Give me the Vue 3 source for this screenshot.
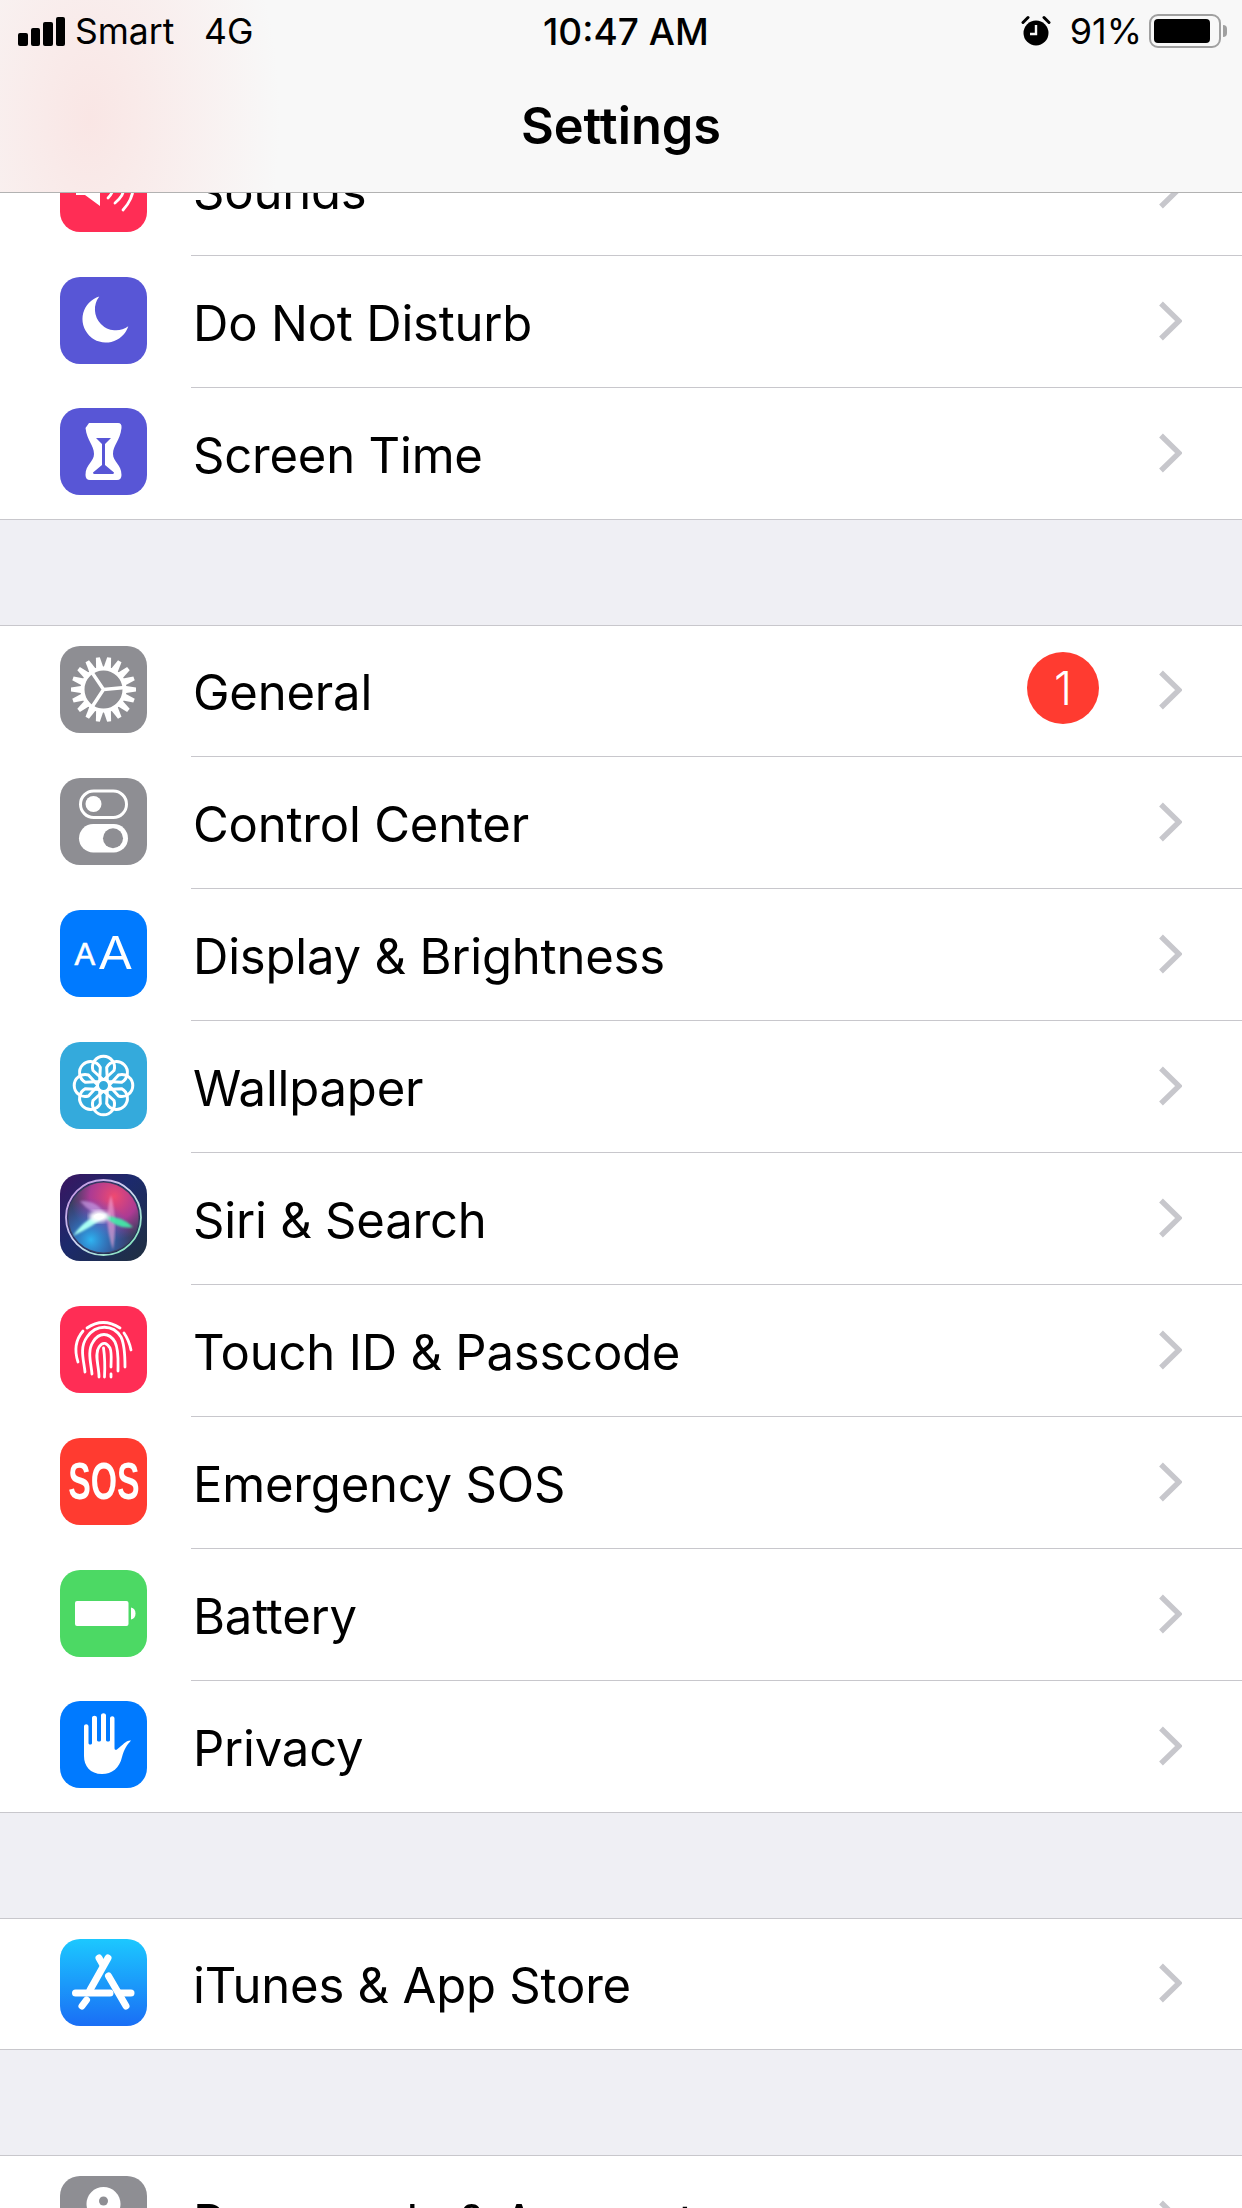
<script setup>
const groups = [
  [
    { id: 'sounds', label: 'Sounds' },
    { id: 'dnd', label: 'Do Not Disturb' },
    { id: 'screentime', label: 'Screen Time' }
  ],
  [
    { id: 'general', label: 'General', badge: 1 },
    { id: 'control', label: 'Control Center' },
    { id: 'display', label: 'Display & Brightness' },
    { id: 'wallpaper', label: 'Wallpaper' },
    { id: 'siri', label: 'Siri & Search' },
    { id: 'touch', label: 'Touch ID & Passcode' },
    { id: 'sos', label: 'Emergency SOS' },
    { id: 'battery', label: 'Battery' },
    { id: 'privacy', label: 'Privacy' }
  ],
  [{ id: 'store', label: 'iTunes & App Store' }],
  [{ id: 'passwords', label: 'Passwords & Accounts' }]
]

const gearTeeth = Array.from({ length: 18 }, (_, i) => i * 20 + 10)
const petals = Array.from({ length: 8 }, (_, i) => i * 45)
</script>

<template>
  <div class="screen">
    <header class="topbar">
      <div class="status">
        <div class="status-left">
          <div class="signal"><i></i><i></i><i></i><i></i></div>
          <span class="carrier">Smart</span>
          <span class="network">4G</span>
        </div>
        <div class="clock">10:47 AM</div>
        <div class="status-right">
          <svg class="alarm" width="30" height="32" viewBox="0 0 30 32">
            <circle cx="15" cy="18" r="12.5" fill="#000" />
            <path d="M15 10v9h-6" fill="none" stroke="#f8f8f8" stroke-width="2.4" />
            <path d="M2 7.5 7 2.5M28 7.5l-5-5" stroke="#000" stroke-width="3" stroke-linecap="round" />
          </svg>
          <span class="percent">91%</span>
          <div class="battery">
            <div class="battery-fill"></div>
          </div>
          <div class="battery-nub"></div>
        </div>
      </div>
      <div class="title">Settings</div>
    </header>

    <main class="list">
      <section v-for="(group, g) in groups" :key="g" class="group">
        <div v-for="row in group" :key="row.id" class="row">
          <div class="icon" :class="'ic-' + row.id">
            <svg v-if="row.id === 'sounds'" viewBox="0 0 87 87">
              <path d="M16 36h9l15-11v36L25 50h-9z" fill="#fff" />
              <path d="M48 53Q58 43 48 33M55 58Q73 43 55 28M63 65Q83 43 63 21" fill="none" stroke="#fff" stroke-width="2.8" stroke-linecap="round" />
            </svg>
            <svg v-else-if="row.id === 'dnd'" viewBox="0 0 87 87">
              <path d="M39.3 19.5A23.5 23.5 0 1 0 68.3 49.3 21 21 0 0 1 39.3 19.5Z" fill="#fff" />
            </svg>
            <svg v-else-if="row.id === 'screentime'" viewBox="0 0 87 87">
              <path d="M29 15H58Q62 15 61.5 20C60 33 53 37 53 46 53 54 61.5 56 61.5 67 61.5 70 60 72 57 72H30C27 72 25.5 70 25.5 67 25.5 56 34 54 34 46 34 37 27 33 25.5 20 25 15 29 15Z" fill="#fff" />
              <path d="M36 30H51L45 36V57L54 64.5Q54 66 52.5 66H34.5Q33 66 33 64.5L42 57V36Z" fill="#5856d6" />
            </svg>
            <svg v-else-if="row.id === 'general'" viewBox="0 0 87 87">
              <circle cx="43.5" cy="43.5" r="21" fill="none" stroke="#fff" stroke-width="4" />
              <path v-for="a in gearTeeth" :key="a" d="M39.5 24 41.5 11H45.5L47.5 24Z" fill="#fff" :transform="`rotate(${a} 43.5 43.5)`" />
              <path d="M43.5 43.5 65 41.5M43.5 43.5 30 23.5M43.5 43.5 30 64" stroke="#fff" stroke-width="3.4" />
            </svg>
            <svg v-else-if="row.id === 'control'" viewBox="0 0 87 87">
              <rect x="20.5" y="13" width="46" height="26.5" rx="13.2" fill="none" stroke="#fff" stroke-width="3" />
              <circle cx="33.5" cy="26" r="8" fill="#fff" />
              <rect x="19" y="46" width="49" height="28.5" rx="14.2" fill="#fff" />
              <circle cx="53" cy="60.2" r="10" fill="#8e8e93" />
            </svg>
            <svg v-else-if="row.id === 'display'" viewBox="0 0 87 87">
              <text x="14.5" y="55" class="aa-small">A</text>
              <text x="39" y="59" class="aa-big">A</text>
            </svg>
            <svg v-else-if="row.id === 'wallpaper'" viewBox="0 0 87 87">
              <path v-for="a in petals" :key="a" d="M43.5 38 33 28.5A11 11 0 1 1 54 28.5Z" fill="none" stroke="#fff" stroke-width="3" stroke-linejoin="round" :transform="`rotate(${a} 43.5 43.5)`" />
              <circle cx="43.5" cy="43.5" r="6" fill="#34aadc" stroke="#fff" stroke-width="3" />
            </svg>
            <svg v-else-if="row.id === 'siri'" viewBox="0 0 87 87">
              <defs>
                <linearGradient id="siriBg" x1="0" y1="0" x2="1" y2="1">
                  <stop offset="0" stop-color="#3a1560" />
                  <stop offset="0.45" stop-color="#1c2a6c" />
                  <stop offset="1" stop-color="#20303f" />
                </linearGradient>
                <linearGradient id="siriRing" x1="0" y1="0" x2="1" y2="1">
                  <stop offset="0" stop-color="#c08ae0" />
                  <stop offset="0.5" stop-color="#d0d8f0" />
                  <stop offset="1" stop-color="#70e8b0" />
                </linearGradient>
                <radialGradient id="siriTop" cx="0.65" cy="0.2" r="0.62">
                  <stop offset="0" stop-color="#f04a70" />
                  <stop offset="0.55" stop-color="#c03a9c" stop-opacity="0.85" />
                  <stop offset="1" stop-color="#a3378f" stop-opacity="0" />
                </radialGradient>
                <radialGradient id="siriLow" cx="0.32" cy="0.82" r="0.6">
                  <stop offset="0" stop-color="#2fb4f0" />
                  <stop offset="1" stop-color="#2a5ae8" stop-opacity="0" />
                </radialGradient>
                <filter id="soft"><feGaussianBlur stdDeviation="0.9" /></filter>
                <filter id="softer"><feGaussianBlur stdDeviation="2" /></filter>
              </defs>
              <rect width="87" height="87" fill="url(#siriBg)" />
              <circle cx="43.5" cy="43.5" r="36" fill="#3a3f60" />
              <circle cx="43.5" cy="43.5" r="35" fill="url(#siriTop)" />
              <circle cx="43.5" cy="43.5" r="35" fill="url(#siriLow)" />
              <circle cx="43.5" cy="43.5" r="37.5" fill="none" stroke="url(#siriRing)" stroke-width="1.8" />
              <path d="M20 27Q38 26 46 42 30 40 20 27Z" fill="#d0a8ec" opacity="0.6" filter="url(#soft)" />
              <path d="M51 21Q43 46 53 76 58 48 51 21Z" fill="#f6a8d8" opacity="0.6" filter="url(#soft)" />
              <path d="M44 42Q62 42 73 53 58 56 44 42Z" fill="#3ff0a8" opacity="0.9" filter="url(#soft)" />
              <path d="M13 62Q28 40 48 40 34 52 13 62Z" fill="#a8fff4" filter="url(#soft)" />
              <ellipse cx="39" cy="42.5" rx="10" ry="5.5" fill="#fff" filter="url(#softer)" />
              <ellipse cx="39" cy="42.5" rx="5" ry="3" fill="#fff" />
            </svg>
            <svg v-else-if="row.id === 'touch'" viewBox="0 0 87 87" fill="none" stroke="#fff" stroke-width="2.8" stroke-linecap="round">
              <path d="M27 22Q43 11 60 22" />
              <path d="M18 56Q12 38 23 25" />
              <path d="M64 27Q69 34 71 44" />
              <path d="M25 66C24 55 19 42 27 31 36 18 53 18 61 31 65 39 65 52 65 61" />
              <path d="M32 68C31 57 27 45 33 36 39 26 49 26 55 36 59 44 58 56 58 65" />
              <path d="M39 71C39 60 34 48 39 41 43 35 47 37 50 42 52 47 51 54 51 61" />
              <path d="M43.5 42C45 52 45 62 44.5 71" />
              <path d="M51 68 51 71" />
            </svg>
            <span v-else-if="row.id === 'sos'" class="sos">SOS</span>
            <svg v-else-if="row.id === 'battery'" viewBox="0 0 87 87">
              <rect x="15" y="31" width="53.5" height="25" rx="2" fill="#fff" />
              <path d="M71 37.5C74 38 75.5 40.5 75.5 43.5 75.5 46.5 74 49 71 49.5Z" fill="#fff" />
            </svg>
            <svg v-else-if="row.id === 'privacy'" viewBox="0 0 87 87">
              <path d="M24 25.5c0-3 4.5-3 4.5 0V42c0 2 3.5 2 3.5 0V17c0-3 5-3 5 0V39c0 2 4 2 4 0V14.5c0-3 5-3 5 0V39c0 2 4 2 4 0V17.5c0-3 4.5-3 4.5 0V47c0 2 1.5 2.5 3 1C63 44 66 39 71 39.5 67 44 64 48 62 56 59.5 67 52 73 42 73 30 73 24 65 24 55Z" fill="#fff" />
            </svg>
            <svg v-else-if="row.id === 'store'" viewBox="0 0 87 87" fill="none" stroke="#fff" stroke-width="7" stroke-linecap="round">
              <path d="M48 19 30 51" />
              <path d="M39 19 43 26" />
              <path d="M48.5 37 66 67" />
              <path d="M15.5 54H50" />
              <path d="M60 54H71" />
              <path d="M22 67 26.5 61" />
            </svg>
            <svg v-else-if="row.id === 'passwords'" viewBox="0 0 87 87">
              <circle cx="43.5" cy="28" r="17" fill="#fff" />
              <circle cx="43.5" cy="25" r="4.5" fill="#8e8e93" />
              <path d="M36 40H51V70L43.5 78 36 70Z" fill="#fff" />
            </svg>
          </div>
          <div class="row-body">
            <span class="label">{{ row.label }}</span>
            <span v-if="row.badge" class="badge">{{ row.badge }}</span>
            <svg class="chevron" width="24" height="40" viewBox="0 0 24 40">
              <path d="M3 2.5 21 20 3 37.5" fill="none" stroke="#c7c7cc" stroke-width="5.4" />
            </svg>
          </div>
        </div>
      </section>
    </main>
  </div>
</template>

<style scoped>
.screen {
  position: relative;
  width: 1242px;
  height: 2208px;
  overflow: hidden;
  background: #efeff4;
  font-family: Inter, "Liberation Sans", sans-serif;
  color: #000;
}

.topbar {
  position: absolute;
  top: 0;
  left: 0;
  right: 0;
  height: 192px;
  z-index: 2;
  background:
    radial-gradient(ellipse 190px 320px at 90px 120px, rgba(250, 220, 218, 0.65), rgba(250, 220, 218, 0)),
    #f8f8f8;
  border-bottom: 1px solid #b2b2b2;
}

.status {
  display: flex;
  align-items: center;
  justify-content: space-between;
  height: 62px;
  position: relative;
}

.status-left {
  display: flex;
  align-items: center;
  padding-left: 18px;
  font-size: 35.5px;
}

.signal {
  display: flex;
  align-items: flex-end;
  gap: 3px;
  height: 29px;
  margin-right: 10px;
}

.signal i {
  display: block;
  width: 9.5px;
  background: #000;
  border-radius: 2px;
}

.signal i:nth-child(1) {
  height: 13px;
}

.signal i:nth-child(2) {
  height: 18px;
}

.signal i:nth-child(3) {
  height: 24px;
}

.signal i:nth-child(4) {
  height: 29px;
}

.carrier {
  width: 129px;
}

.clock {
  position: absolute;
  left: 543px;
  font-size: 37px;
  font-weight: 500;
}

.status-right {
  display: flex;
  align-items: center;
  font-size: 36px;
  padding-right: 15px;
}

.alarm {
  margin-right: 19px;
}

.percent {
  margin-right: 7px;
}

.battery {
  width: 72px;
  height: 34px;
  box-sizing: border-box;
  border: 2.5px solid #a0a0a0;
  border-radius: 9px;
  padding: 3px;
}

.battery-fill {
  width: 90%;
  height: 100%;
  background: #000;
  border-radius: 4px;
}

.battery-nub {
  width: 4px;
  height: 12px;
  margin-left: 2px;
  background: #a0a0a0;
  border-radius: 0 4px 4px 0;
}

.title {
  text-align: center;
  font-size: 50.5px;
  font-weight: 600;
  line-height: 60px;
  margin-top: 34px;
}

.list {
  padding-top: 124px;
}

.group {
  background: #fff;
  margin-bottom: 105px;
}

.group + .group {
  border-top: 1px solid #c8c7cc;
}

.row {
  display: flex;
  align-items: center;
  box-sizing: border-box;
  height: 132px;
  padding-left: 60px;
}

.group + .group .row:first-child {
  height: 131px;
}

.row:last-child {
  border-bottom: 1px solid #c8c7cc;
}

.icon {
  flex: none;
  width: 87px;
  height: 87px;
  margin-top: -4px;
  margin-right: 44px;
  border-radius: 20px;
  overflow: hidden;
  display: flex;
  align-items: center;
  justify-content: center;
}

.icon svg {
  display: block;
  width: 87px;
  height: 87px;
}

.ic-sounds,
.ic-touch {
  background: #ff2d55;
}

.ic-dnd,
.ic-screentime {
  background: #5856d6;
}

.ic-general,
.ic-control,
.ic-passwords {
  background: #8e8e93;
}

.ic-display,
.ic-privacy {
  background: #007aff;
}

.ic-wallpaper {
  background: #34aadc;
}

.ic-sos {
  background: #ff3b30;
}

.ic-battery {
  background: #4cd964;
}

.ic-store {
  background: linear-gradient(#1cc8ff, #1a6ef5);
}

.aa-small,
.aa-big {
  fill: #fff;
  font-family: "Liberation Sans", sans-serif;
}

.aa-small {
  font-size: 31px;
  stroke: #fff;
  stroke-width: 0.6px;
}

.aa-big {
  font-size: 49px;
}

.sos {
  color: #fff;
  font-family: "Liberation Sans", sans-serif;
  font-weight: 700;
  font-size: 52px;
  transform: scaleX(0.65);
}

.row-body {
  flex: 1;
  align-self: stretch;
  display: flex;
  align-items: center;
  box-sizing: border-box;
  border-bottom: 1px solid #c8c7cc;
  padding-left: 2px;
  padding-right: 60px;
}

.row:last-child .row-body {
  border-bottom: none;
}

.label {
  flex: 1;
  font-size: 49px;
  letter-spacing: -0.2px;
  margin-top: 3px;
}

.badge {
  width: 72px;
  height: 72px;
  margin-right: 59px;
  margin-bottom: 6px;
  border-radius: 50%;
  background: #ff3b30;
  color: #fff;
  font-size: 46px;
  font-weight: 300;
  line-height: 72px;
  text-align: center;
}

.chevron {
  display: block;
  margin-bottom: 2px;
}
</style>
